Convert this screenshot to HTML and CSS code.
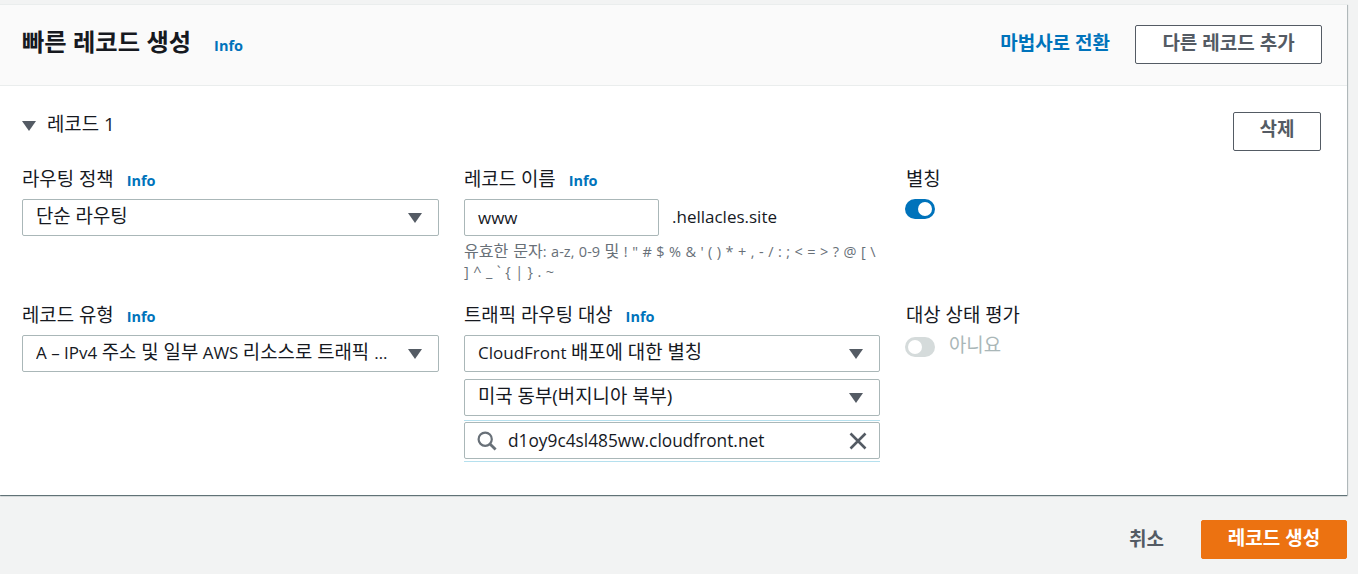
FILE: index.html
```html
<!DOCTYPE html>
<html lang="ko">
<head>
<meta charset="utf-8">
<title>빠른 레코드 생성</title>
<link rel="stylesheet" href="styles.css">
</head>
<body>
<section class="panel">
  <header class="panel-head">
    <div class="title-wrap"><h1 class="title">빠른 레코드 생성</h1><a class="info info-title">Info</a></div>
    <div class="head-actions">
      <a class="wizard">마법사로 전환</a>
      <button class="btn btn-add">다른 레코드 추가</button>
    </div>
  </header>
  <div class="panel-body">
    <div class="record-head">
      <div class="record-title"><span class="caret caret-record"></span><span class="ko">레코드 1</span></div>
      <button class="btn btn-del">삭제</button>
    </div>
    <div class="form-grid">
      <div class="field">
        <div class="label"><span class="ko">라우팅 정책</span><a class="info">Info</a></div>
        <div class="select"><span class="select-text ko">단순 라우팅</span><span class="caret"></span></div>
      </div>
      <div class="field">
        <div class="label"><span class="ko">레코드 이름</span><a class="info">Info</a></div>
        <div class="name-row"><div class="input">www</div><span class="suffix">.hellacles.site</span></div>
        <p class="hint"><span class="ko">유효한 문자</span>: a-z, 0-9 <span class="ko">및</span> ! " # $ % &amp; ' ( ) * + , - / : ; &lt; = &gt; ? @ [ \ ] ^ _ ` { | } . ~</p>
      </div>
      <div class="field field-side">
        <div class="label"><span class="ko">별칭</span></div>
        <div class="toggle toggle-on"><span class="knob"></span></div>
      </div>
      <div class="field">
        <div class="label"><span class="ko">레코드 유형</span><a class="info">Info</a></div>
        <div class="select"><span class="select-text select-mixed">A – IPv4 <span class="ko">주소 및 일부</span> AWS <span class="ko">리소스로 트래픽 라우팅</span></span><span class="caret"></span></div>
      </div>
      <div class="field">
        <div class="label"><span class="ko">트래픽 라우팅 대상</span><a class="info">Info</a></div>
        <div class="stack">
          <div class="select"><span class="select-text select-mixed">CloudFront <span class="ko">배포에 대한 별칭</span></span><span class="caret"></span></div>
          <div class="select"><span class="select-text ko">미국 동부(버지니아 북부)</span><span class="caret"></span></div>
          <div class="search-wrap">
            <div class="search">
              <svg class="icon-search" viewBox="0 0 20 20" width="20" height="20"><circle cx="8.2" cy="8.2" r="6.6" fill="none" stroke="#687078" stroke-width="2.2"/><path d="M13 13l5.6 5.6" stroke="#687078" stroke-width="2.8" fill="none"/></svg>
              <span class="search-text">d1oy9c4sl485ww.cloudfront.net</span>
              <svg class="icon-x" viewBox="0 0 18 18" width="18" height="18"><path d="M1.5 1.5l15 15M16.5 1.5l-15 15" stroke="#545b64" stroke-width="2.6" fill="none"/></svg>
            </div>
          </div>
        </div>
      </div>
      <div class="field field-side">
        <div class="label"><span class="ko">대상 상태 평가</span></div>
        <div class="toggle-row"><div class="toggle toggle-off"><span class="knob"></span></div><span class="toggle-text ko">아니요</span></div>
      </div>
    </div>
  </div>
</section>
<footer class="footer">
  <a class="cancel">취소</a>
  <button class="btn btn-primary">레코드 생성</button>
</footer>
</body>
</html>
```

FILE: styles.css
```css
* { box-sizing: border-box; }
html, body { margin: 0; padding: 0; height: 574px; overflow: hidden; }
body {
  background: #f2f3f3;
  font-family: "Open Sans", "Noto Sans CJK KR", sans-serif;
  font-size: 17px;
  color: #16191f;
  padding-top: 4px;
}
.ko { font-size: 1.11em; }
.panel {
  width: 1347px;
  height: 491px;
  background: #fff;
  border-top: 1px solid #eaeded;
  box-shadow: 0 1px 1px 0 rgba(0, 28, 36, .5), 1px 1px 1px 0 rgba(0, 28, 36, .2);
}
.panel-head {
  height: 81px;
  background: #fafafa;
  border-bottom: 1px solid #eaeded;
  display: flex;
  justify-content: space-between;
  align-items: flex-start;
  padding: 20px 25px 0 22px;
}
.title-wrap { display: flex; align-items: center; height: 33px; }
.title { margin: 0; font-size: 24.3px; font-weight: 700; line-height: 33px; }
.info { color: #0073bb; font-size: 14.5px; font-weight: 700; margin-left: 13px; line-height: 20px; position: relative; top: 2px; }
.info-title { margin-left: 23px; top: 4px; }
.head-actions { display: flex; align-items: center; gap: 25px; }
.wizard { color: #0073bb; font-weight: 700; font-size: 19px; position: relative; top: -3px; }
.btn {
  font-family: inherit;
  font-size: 19px;
  font-weight: 700;
  color: #545b64;
  background: #fff;
  border: 1px solid #545b64;
  border-radius: 2px;
  padding: 0 0 5px;
  height: 39px;
}
.btn-add { width: 187px; }
.btn-del { width: 88px; padding-bottom: 7px; }
.panel-body { padding: 26px 26px 0 22px; }
.record-head { display: flex; justify-content: space-between; align-items: flex-start; }
.record-title { display: flex; align-items: center; gap: 11px; line-height: 24px; height: 24px; }
.caret {
  width: 0; height: 0; flex: none;
  border-left: 7px solid transparent;
  border-right: 7px solid transparent;
  border-top: 10px solid #545b64;
}
.caret-record { margin-top: 3px; }
.form-grid {
  display: grid;
  grid-template-columns: 417px 416px 1fr;
  column-gap: 25px;
  row-gap: 0;
  margin-top: 15px;
}
.field:nth-child(-n+3) { height: 136px; }
.label { display: flex; align-items: center; height: 26px; margin-bottom: 7px; line-height: 26px; }
.field-side .label { padding-left: 1px; }
.select, .input, .search {
  border: 1px solid #aab7b8;
  border-radius: 2px;
  background: #fff;
  height: 37px;
}
.select { display: flex; align-items: center; justify-content: space-between; padding: 0 16px 0 13px; }
.select-text { flex: 1; white-space: nowrap; overflow: hidden; text-overflow: ellipsis; margin-right: 11px; position: relative; top: -2px; line-height: 26px; }
.select-mixed { top: -1px; }
.name-row { display: flex; align-items: center; gap: 13px; }
.input { width: 195px; padding: 0 13px; line-height: 35px; }
.suffix { position: relative; top: -1px; }
.hint { margin: 5px 0 0; font-size: 14.5px; line-height: 20px; color: #687078; word-spacing: .7px; }
.stack { display: flex; flex-direction: column; gap: 7px; }
.search-wrap { border-top: 1px solid #b5e0ee; border-bottom: 1px solid #b5e0ee; padding: 1px 0 2px; margin-top: -3px; }
.search { display: flex; align-items: center; padding: 0 12px 0 12px; }
.icon-search { flex: none; }
.search-text { flex: 1; margin-left: 11px; font-size: 17.3px; }
.icon-x { flex: none; }
.toggle { width: 30px; height: 20px; border-radius: 10px; position: relative; }
.toggle-on { background: #0073bb; margin-top: 4px; }
.toggle-off { background: #d5dbdb; }
.knob { position: absolute; top: 3px; width: 14px; height: 14px; border-radius: 50%; background: #fff; }
.toggle-on .knob { right: 3px; }
.toggle-off .knob { left: 3px; }
.toggle-row { display: flex; align-items: center; gap: 14px; margin-top: 2px; }
.toggle-text { color: #aab7b8; line-height: 24px; position: relative; top: -2px; }
.footer { display: flex; justify-content: flex-end; align-items: center; width: 1347px; padding-top: 25px; gap: 37px; }
.cancel { font-weight: 700; color: #545b64; font-size: 19px; position: relative; top: -2px; }
.btn-primary { width: 146px; background: #ec7211; border: 1px solid #ec7211; color: #fff; }
```
